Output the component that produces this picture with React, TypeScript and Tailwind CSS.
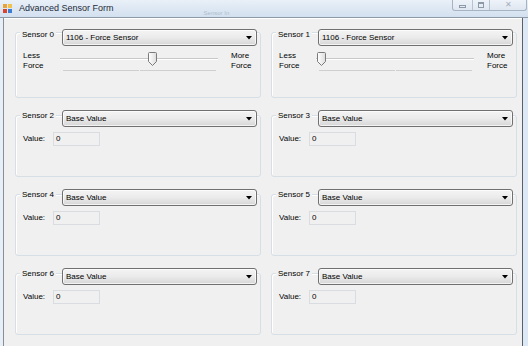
import React from "react";

const font = "font-['Liberation_Sans',Arial,sans-serif]";

function Combo({ text }: { text: string }) {
  return (
    <div className="ml-auto mr-[3px] w-[195px] h-[17px] rounded-[3px] border border-[#707070] bg-gradient-to-b from-[#f4f4f4] via-[#ebebeb] to-[#d6d6d6] flex items-center pl-[3px] pr-[4px] shadow-[inset_0_0_0_1px_rgba(255,255,255,0.7)]">
      <span className="text-[8px] leading-[10px] text-black flex-1">{text}</span>
      <svg width="6" height="4" viewBox="0 0 6 4">
        <path d="M0 0 H6 L3 3.5 Z" fill="#000" />
      </svg>
    </div>
  );
}

function Thumb() {
  return (
    <svg width="9" height="14" viewBox="0 0 9 14">
      <defs>
        <linearGradient id="tg" x1="0" x2="1" y1="0" y2="0">
          <stop offset="0" stopColor="#ffffff" />
          <stop offset="1" stopColor="#dcdcdc" />
        </linearGradient>
      </defs>
      <path d="M1.5 0.5 H7.5 Q8.5 0.5 8.5 1.5 V9.5 L4.5 13.5 L0.5 9.5 V1.5 Q0.5 0.5 1.5 0.5 Z" fill="url(#tg)" stroke="#7a7a7a" />
    </svg>
  );
}

function Slider({ pos }: { pos: number }) {
  return (
    <div className="relative w-[158px] h-[22px]">
      <div className="absolute left-0 right-0 top-[7px] h-[2px] border-t border-[#c8c8c8] border-b border-b-white bg-[#e4e4e4]" />
      <div className="absolute top-[1px]" style={{ left: pos }}>
        <Thumb />
      </div>
      <div className="absolute top-[19px] left-[3px] w-[76px] h-px bg-[#cfcfcf]" />
      <div className="absolute top-[19px] left-[80px] w-[76px] h-px bg-[#cfcfcf]" />
    </div>
  );
}

function Header({ label, combo, top }: { label: string; combo: string; top: string }) {
  return (
    <div className={`flex items-start ${top} h-[17px]`}>
      <span className="ml-[4px] mt-[1px] px-[2px] bg-[#f0f0f0] text-[8px] leading-[10px] text-black">{label}</span>
      <Combo text={combo} />
    </div>
  );
}

function SliderBox({ label, pos }: { label: string; pos: number }) {
  return (
    <div className="h-[66px] border border-[#d5dfe5] rounded-[3px] shadow-[inset_1px_1px_0_#ffffff]">
      <Header label={label} combo="1106 - Force Sensor" top="-mt-[4px]" />
      <div className="flex mt-[5px]">
        <div className="w-[44px] pl-[7px] text-[8px] leading-[10px] text-black">
          Less
          <br />
          Force
        </div>
        <Slider pos={pos} />
        <div className="ml-[13px] text-[8px] leading-[10px] text-black">
          More
          <br />
          Force
        </div>
      </div>
    </div>
  );
}

function ValueBox({ label }: { label: string }) {
  return (
    <div className="h-[62px] border border-[#d5dfe5] rounded-[3px] shadow-[inset_1px_1px_0_#ffffff]">
      <Header label={label} combo="Base Value" top="-mt-[6px]" />
      <div className="flex items-center mt-[5px]">
        <span className="ml-[7px] w-[30px] text-[8px] leading-[10px] text-black">Value:</span>
        <div className="w-[47px] h-[14px] border border-[#d9dde2] bg-[#f0f0f0] flex items-center pl-[2px] text-[8px] leading-[10px] text-black">
          0
        </div>
      </div>
    </div>
  );
}

export default function App() {
  return (
    <div className={`w-[528px] h-[346px] overflow-hidden bg-[#e3ecf6] flex flex-col ${font}`}>
      {/* title bar */}
      <div className="h-[17px] flex items-start bg-gradient-to-b from-[#e9f0f8] to-[#d3e0ef] relative">
        <svg className="ml-[3px] mt-[4px]" width="9" height="9" viewBox="0 0 9 9">
          <rect x="0" y="0" width="4" height="4" fill="#e8a33a" />
          <rect x="5" y="0" width="4" height="4" fill="#f2c14e" />
          <rect x="0" y="5" width="4" height="4" fill="#d9442c" />
          <rect x="5" y="5" width="4" height="4" fill="#3b7fd4" />
        </svg>
        <span className="ml-[7px] mt-[3px] text-[9px] leading-[10px] text-[#1e2b3a]">Advanced Sensor Form</span>
        <span className="ml-[90px] mt-[10px] text-[6px] leading-[7px] text-[#aebdcd]">Sensor In</span>
        <div className="ml-auto mr-[1px] flex h-[11px] border border-t-0 border-[#a6b3c2] rounded-b-[3px] bg-gradient-to-b from-[#eef3f9] to-[#dfe7f1]">
          <div className="w-[20px] flex items-center justify-center border-r border-[#b7c3d0]">
            <div className="w-[7px] h-[3px] border border-[#8d99a7] mt-[2px]" />
          </div>
          <div className="w-[17px] flex items-center justify-center border-r border-[#b7c3d0]">
            <div className="w-[6px] h-[6px] border border-[#8d99a7] border-t-2" />
          </div>
          <div className="w-[36px] flex items-center justify-center text-[8px] leading-[8px] text-[#a3aebb]">
            ✕
          </div>
        </div>
      </div>
      <div className="h-px bg-[#8e99a6]" />
      <div className="flex flex-1">
        <div className="w-[3px] bg-[#e6eef7]" />
        <div className="w-px bg-[#8a8f96]" />
        <div className="flex-1 bg-[#f0f0f0] border-t border-white pt-[13px] pl-[11px] pr-[5px]">
          <div className="grid grid-cols-[246px_246px] gap-x-[10px] gap-y-[17px]">
            <SliderBox label="Sensor 0" pos={88} />
            <SliderBox label="Sensor 1" pos={1} />
            <ValueBox label="Sensor 2" />
            <ValueBox label="Sensor 3" />
            <ValueBox label="Sensor 4" />
            <ValueBox label="Sensor 5" />
            <ValueBox label="Sensor 6" />
            <ValueBox label="Sensor 7" />
          </div>
        </div>
        <div className="w-px bg-[#5b6068]" />
        <div className="w-[5px] bg-[#dce8f5]" />
      </div>
    </div>
  );
}
